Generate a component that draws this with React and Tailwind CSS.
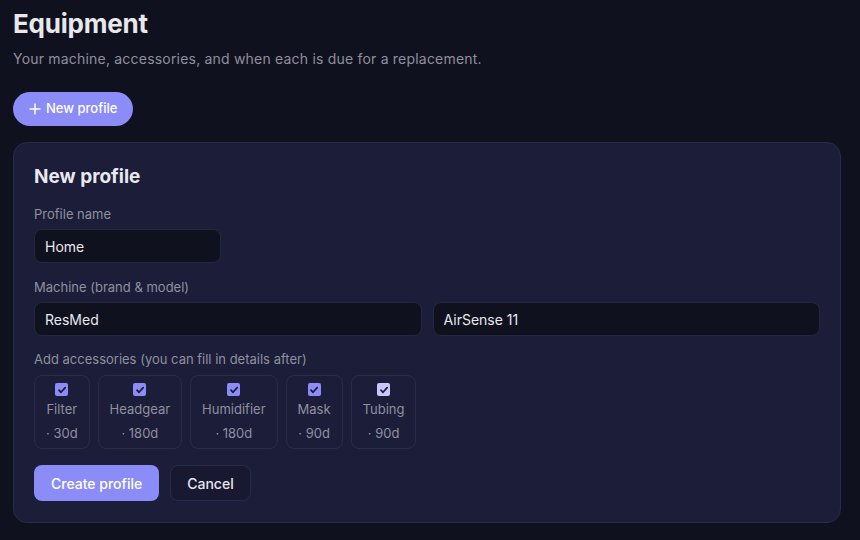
import { useState } from "react";

const accessories = [
  { name: "Filter", days: 30 },
  { name: "Headgear", days: 180 },
  { name: "Humidifier", days: 180 },
  { name: "Mask", days: 90 },
  { name: "Tubing", days: 90, hover: true },
];

function Check({ light }) {
  return (
    <span
      className={`flex h-[13px] w-[13px] items-center justify-center rounded-[2px] ${
        light ? "bg-[#c7c7fc]" : "bg-[#8b8cf8]"
      }`}
    >
      <svg width="10" height="10" viewBox="0 0 10 10" fill="none">
        <path
          d="M2 5.2 4 7.3 8.2 2.6"
          stroke="#1b1b2e"
          strokeWidth="1.7"
          strokeLinecap="round"
          strokeLinejoin="round"
        />
      </svg>
    </span>
  );
}

export default function App() {
  const [name, setName] = useState("Home");
  const [brand, setBrand] = useState("ResMed");
  const [model, setModel] = useState("AirSense 11");

  return (
    <div
      className="min-h-[540px] bg-[#10111f] px-[13px] pt-2 text-[#e6e6ec]"
      style={{ fontFamily: "Inter, 'Noto Sans', sans-serif" }}
    >
      <h1 className="text-[26px] font-bold leading-8 tracking-[-0.2px] text-[#e8e8ec]">
        Equipment
      </h1>
      <p className="mt-[9px] text-[14px] leading-5 tracking-[0.2px] text-[#8f8f9c]">
        Your machine, accessories, and when each is due for a replacement.
      </p>

      <button className="mt-[23px] flex h-[34px] items-center gap-[5px] rounded-full bg-[#8b8cf8] pl-4 pr-4 text-[13px] font-medium text-white">
        <svg width="12" height="12" viewBox="0 0 12 12" fill="none">
          <path d="M6 0.5v11M0.5 6h11" stroke="white" strokeWidth="1.5" />
        </svg>
        New profile
      </button>

      <div className="mt-4 w-[828px] rounded-[14px] border border-[#2a2b48] bg-[#1c1d38] px-5 pt-5 pb-[21px]">
        <h2 className="text-[19px] font-bold leading-7 text-[#e8e8ee]">New profile</h2>

        <label className="mt-[14px] block text-[13px] leading-[18px] text-[#8f90a0]">
          Profile name
        </label>
        <input
          value={name}
          onChange={(e) => setName(e.target.value)}
          className="mt-[6px] block h-[34px] w-[187px] rounded-lg border border-[#25263f] bg-[#10111f] px-[10px] text-[14px] text-[#e8e8ee] outline-none"
        />

        <label className="mt-[15px] block text-[13px] leading-[18px] text-[#8f90a0]">
          Machine (brand &amp; model)
        </label>
        <div className="mt-[6px] flex gap-[11px]">
          <input
            value={brand}
            onChange={(e) => setBrand(e.target.value)}
            className="h-[34px] flex-1 rounded-lg border border-[#25263f] bg-[#10111f] px-[10px] text-[14px] text-[#e8e8ee] outline-none"
          />
          <input
            value={model}
            onChange={(e) => setModel(e.target.value)}
            className="h-[34px] flex-1 rounded-lg border border-[#25263f] bg-[#10111f] px-[10px] text-[14px] text-[#e8e8ee] outline-none"
          />
        </div>

        <label className="mt-[14px] block text-[13px] leading-[18px] text-[#8f90a0]">
          Add accessories (you can fill in details after)
        </label>
        <div className="mt-[7px] flex gap-2">
          {accessories.map((a) => (
            <div
              key={a.name}
              className="flex flex-col items-center rounded-lg border border-[#2a2b48] px-[11px] pt-[7px] pb-[6px] text-[13px] text-[#8f90a0]"
            >
              <Check light={a.hover} />
              <span className="mt-[4px] leading-[18px]">{a.name}</span>
              <span className="mt-[6px] leading-[18px]">· {a.days}d</span>
            </div>
          ))}
        </div>

        <div className="mt-4 flex gap-[11px]">
          <button className="h-9 rounded-lg bg-[#8b8cf8] px-[17px] text-[14px] font-medium text-white">
            Create profile
          </button>
          <button className="h-9 rounded-lg border border-[#2a2b48] bg-[#181930] px-4 text-[14px] font-medium text-[#e6e6ec]">
            Cancel
          </button>
        </div>
      </div>
    </div>
  );
}
